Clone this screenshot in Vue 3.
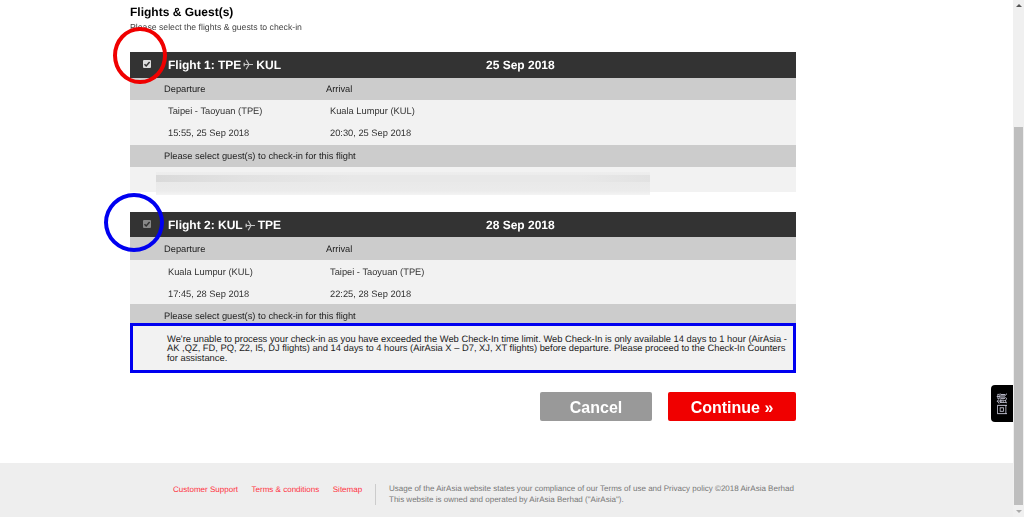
<script setup>
const flights = [
  { id: 1, title: 'Flight 1: TPE', dest: 'KUL', date: '25 Sep 2018', from: 'Taipei - Taoyuan (TPE)', to: 'Kuala Lumpur (KUL)', dep: '15:55, 25 Sep 2018', arr: '20:30, 25 Sep 2018', muted: false },
  { id: 2, title: 'Flight 2: KUL', dest: 'TPE', date: '28 Sep 2018', from: 'Kuala Lumpur (KUL)', to: 'Taipei - Taoyuan (TPE)', dep: '17:45, 28 Sep 2018', arr: '22:25, 28 Sep 2018', muted: true }
]
</script>

<template>
  <div class="screen">
    <div class="page">
      <main class="content">
        <h1 class="heading">Flights &amp; Guest(s)</h1>
        <p class="sub">Please select the flights &amp; guests to check-in</p>

        <section v-for="f in flights" :key="f.id" class="flight" :class="{ second: f.id === 2 }">
          <header class="bar">
            <span class="check" :class="{ muted: f.muted }">
              <svg viewBox="0 0 8 8" width="8" height="8"><path d="M1.5 4.2 3.2 6 6.6 2" fill="none" stroke="#333" stroke-width="1.5"/></svg>
            </span>
            <span class="route">
              <span>{{ f.title }}</span>
              <svg class="plane" viewBox="0 0 11 11" width="11" height="11"><path d="M0.5 5.5H10M3.2 0.8 6 5.5 3.2 10.2M0.8 3.8 1.8 5.5 0.8 7.2" fill="none" stroke="#c4c4c4" stroke-width="1.2"/></svg>
              <span>{{ f.dest }}</span>
            </span>
            <span class="date">{{ f.date }}</span>
          </header>
          <div class="row gray cols labels head">
            <span class="col-a">Departure</span>
            <span>Arrival</span>
          </div>
          <div class="light info">
            <div class="cols values"><span class="col-a">{{ f.from }}</span><span>{{ f.to }}</span></div>
            <div class="cols values"><span class="col-a">{{ f.dep }}</span><span>{{ f.arr }}</span></div>
          </div>
          <div class="row gray labels prompt">Please select guest(s) to check-in for this flight</div>
          <div v-if="f.id === 1" class="light guests">
            <div class="redacted"></div>
          </div>
          <div v-else class="notice">
            We're unable to process your check-in as you have exceeded the Web Check-In time limit. Web Check-In is only available 14 days to 1 hour (AirAsia - AK ,QZ, FD, PQ, Z2, I5, DJ flights) and 14 days to 4 hours (AirAsia X – D7, XJ, XT flights) before departure. Please proceed to the Check-In Counters for assistance.
          </div>
        </section>

        <div class="actions">
          <button class="btn cancel">Cancel</button>
          <button class="btn go">Continue »</button>
        </div>

        <span class="ring red"></span>
        <span class="ring blue"></span>
      </main>

      <footer class="footer">
        <nav class="links">
          <a>Customer Support</a>
          <a>Terms &amp; conditions</a>
          <a>Sitemap</a>
        </nav>
        <div class="legal">
          Usage of the AirAsia website states your compliance of our Terms of use and Privacy policy ©2018 AirAsia Berhad<br>
          This website is owned and operated by AirAsia Berhad ("AirAsia").
        </div>
      </footer>

      <div class="feedback"><span>回饋</span></div>
    </div>

    <aside class="scrollbar">
      <span class="arrow up"></span>
      <span class="track"><span class="thumb"></span></span>
      <span class="arrow down"></span>
    </aside>
  </div>
</template>

<style>
html, body { margin: 0; background: #fff; overflow: hidden; }
</style>

<style scoped>
.screen {
  display: flex;
  width: 1024px;
  height: 517px;
  overflow: hidden;
  font-family: "Liberation Sans", Arial, sans-serif;
  color: #222;
  text-rendering: geometricPrecision;
  filter: blur(0.35px);
}
.page {
  position: relative;
  flex: 1;
  display: flex;
  flex-direction: column;
  min-width: 0;
}
.content {
  position: relative;
  flex: 1;
  width: 666px;
  margin-left: 130px;
  padding-top: 5px;
}
.heading {
  margin: 0;
  font-size: 12px;
  line-height: 15px;
  font-weight: 700;
  color: #000;
}
.sub {
  margin: 0 0 20px;
  height: 12px;
  font-size: 8.7px;
  line-height: 14px;
  color: #444;
}
.flight { margin-bottom: 20px; }
.bar {
  position: relative;
  box-sizing: border-box;
  display: flex;
  align-items: center;
  height: 25.5px;
  background: #333;
  color: #fff;
  font-weight: 700;
  font-size: 12px;
}
.second .bar { padding-top: 2px; }
.check {
  display: flex;
  align-items: center;
  justify-content: center;
  width: 8px;
  height: 8px;
  margin: 0 0 2px 13px;
  background: #ddd;
  border-radius: 1px;
}
.check.muted { background: #888; }
.route {
  display: flex;
  align-items: center;
  gap: 2px;
  margin-left: 17px;
  white-space: nowrap;
}
.date {
  position: absolute;
  left: 356px;
  font-size: 12px;
}
.row { display: flex; align-items: center; }
.gray { background: #ccc; }
.light { background: #f2f2f2; }
.labels {
  box-sizing: border-box;
  height: 22px;
  padding-left: 34px;
  font-size: 9.3px;
  color: #222;
}
.cols { display: flex; }
.labels .col-a { width: 162px; }
.info { height: 45px; padding-left: 38px; box-sizing: border-box; }
.values {
  height: 22px;
  align-items: center;
  font-size: 9.3px;
  color: #333;
}
.values .col-a { width: 162px; }
.second .head { height: 23px; padding-top: 1px; }
.second .info { height: 44px; padding-top: 1px; }
.second .prompt { padding-top: 2px; }
.guests {
  position: relative;
  height: 25px;
}
.redacted {
  position: absolute;
  left: 26px;
  top: 5px;
  width: 494px;
  height: 23px;
  background:
    linear-gradient(90deg, #dadada 0, #e2e2e2 18%, #e8e8e8 40%, #e8e8e8 86%, #e2e2e2 100%) no-repeat 0 3px / 100% 7px,
    linear-gradient(180deg, #eeeeee 0, #e9e9e9 40%, #ebebeb 80%, #f4f4f4 100%);
}
.notice {
  box-sizing: border-box;
  position: relative;
  height: 50px;
  margin-top: -3.5px;
  padding: 9px 5px 0 34px;
  border: 3.5px solid #0000f0;
  background: #f2f2f2;
  font-size: 9.35px;
  line-height: 9.7px;
  color: #222;
}
.actions {
  display: flex;
  justify-content: flex-end;
  gap: 16px;
  margin-top: -1px;
}
.btn {
  height: 29px;
  border: 0;
  border-radius: 2px;
  padding: 3px 0 0;
  font: 700 16px "Liberation Sans", Arial, sans-serif;
  color: #fff;
}
.cancel { width: 112px; background: #999; }
.go { width: 128px; background: #f00000; }
.ring {
  position: absolute;
  box-sizing: border-box;
  border-radius: 50%;
  border-style: solid;
  border-width: 4.5px;
}
.ring.red { left: -17px; top: 26.5px; width: 54px; height: 57.5px; border-color: #f00000; }
.ring.blue { left: -26px; top: 193px; width: 60px; height: 59px; border-color: #0000f0; }
.footer {
  display: flex;
  align-items: center;
  height: 54px;
  box-sizing: border-box;
  padding: 9px 0 0 173px;
  background: #eee;
  font-size: 8.02px;
}
.links {
  display: flex;
  gap: 13.5px;
  color: #ff3040;
  padding-bottom: 11px;
  width: 202px;
  white-space: nowrap;
}
.legal {
  border-left: 1px solid #ccc;
  padding-left: 13px;
  line-height: 10.5px;
  color: #777;
  white-space: nowrap;
}
.feedback {
  position: absolute;
  right: 0;
  top: 385px;
  display: flex;
  align-items: center;
  justify-content: center;
  width: 22px;
  height: 37px;
  background: #000;
  border-radius: 4px 0 0 4px;
  color: #ccd;
  font: 11px "Noto Sans CJK TC", sans-serif;
}
.feedback span {
  display: block;
  transform: rotate(-90deg);
  white-space: nowrap;
}
.scrollbar {
  display: flex;
  flex-direction: column;
  align-items: center;
  width: 11px;
  background: #f0f0f0;
}
.arrow {
  width: 0;
  height: 0;
  border-left: 3px solid transparent;
  border-right: 3px solid transparent;
}
.arrow.up { margin: 4px 0 4px; border-bottom: 3px solid #555; }
.arrow.down { margin: 4px 0 4px; border-top: 3px solid #aaa; }
.track { flex: 1; width: 9px; }
.thumb { display: block; margin-top: 116px; height: 378px; background: #bebebe; }
</style>
